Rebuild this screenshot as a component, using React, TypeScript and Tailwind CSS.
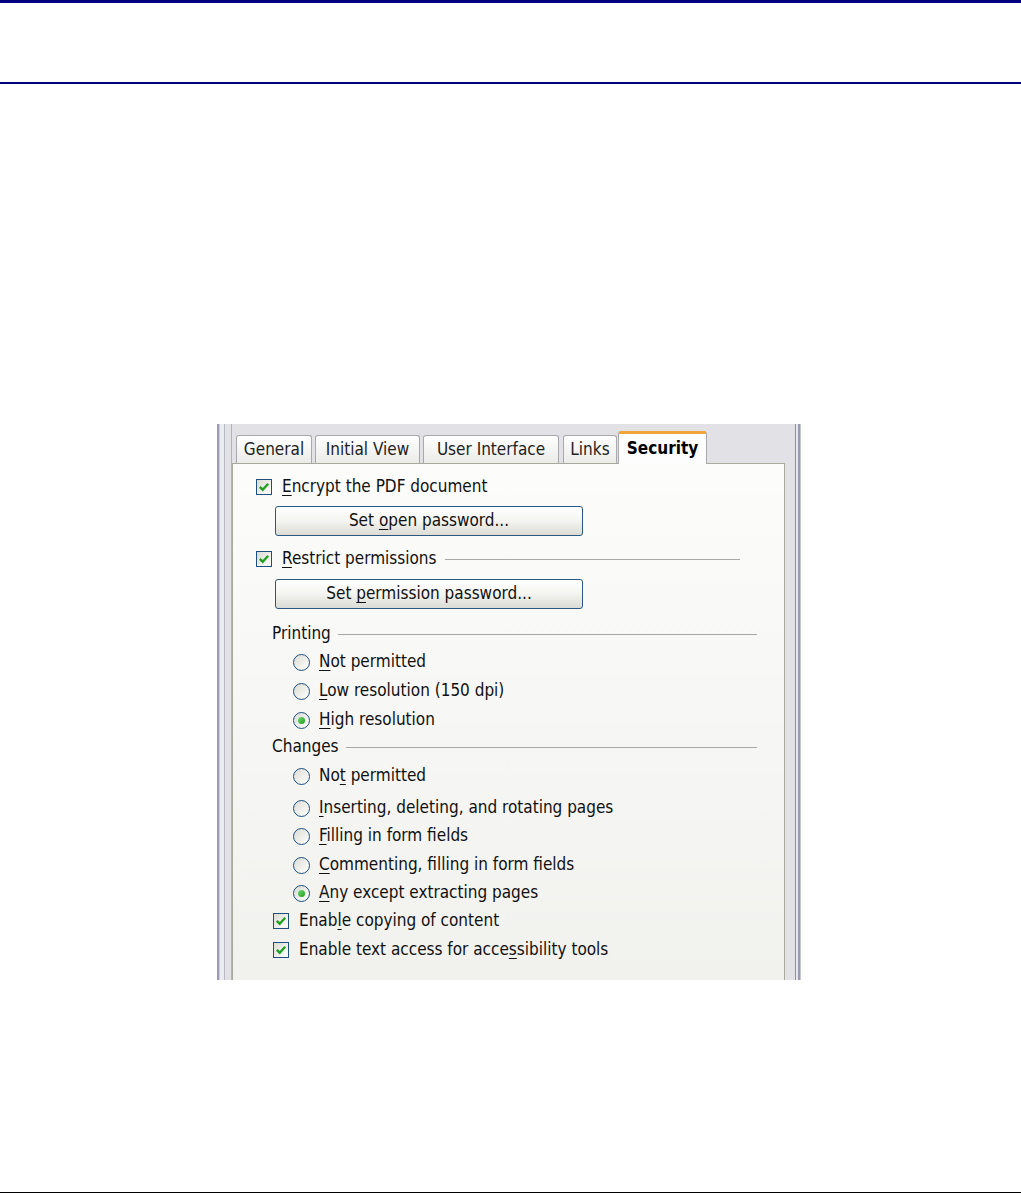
import React from "react";

const FONT = "font-['DejaVu_Sans_Condensed','DejaVu_Sans',sans-serif]";

// one label with its access-key letter underlined
const Label: React.FC<{ text: string; u?: number }> = ({ text, u }) => {
  if (u === undefined) return <span>{text}</span>;
  return (
    <span>
      {text.slice(0, u)}
      <span className="underline underline-offset-[3px] decoration-1">{text[u]}</span>
      {text.slice(u + 1)}
    </span>
  );
};

const CheckBox: React.FC = () => (
  <div className="w-[16px] h-[16px] shrink-0 border border-[#1f4f7e] bg-gradient-to-br from-[#dcdcd4] to-[#ffffff] flex items-center justify-center">
    <svg width="12" height="12" viewBox="0 0 12 12">
      <path d="M1.8 5.8 L4.7 8.7 L10.2 2.8" fill="none" stroke="#21a121" strokeWidth="2.4" />
    </svg>
  </div>
);

const Radio: React.FC<{ on?: boolean }> = ({ on }) => (
  <div className="w-[17px] h-[17px] shrink-0 rounded-full border border-[#1f4f7e] bg-gradient-to-br from-[#dcdcd4] to-[#ffffff] flex items-center justify-center">
    {on && <div className="w-[7px] h-[7px] rounded-full bg-gradient-to-br from-[#6fdc6f] to-[#1c9c1c]" />}
  </div>
);

const PushButton: React.FC<{ text: string; u: number; mt: string }> = ({ text, u, mt }) => (
  <div
    className={`${mt} ml-[42px] w-[308px] h-[30px] rounded-[3px] border border-[#2d5783] bg-gradient-to-b from-[#ffffff] via-[#f4f4f0] to-[#dcdcd6] flex items-center justify-center`}
  >
    <Label text={text} u={u} />
  </div>
);

const Tab: React.FC<{ text: string; w: string; ml: string }> = ({ text, w, ml }) => (
  <div
    className={`${w} ${ml} h-[28px] rounded-t-[3px] border border-b-0 border-[#a9a8ad] bg-gradient-to-b from-[#ffffff] to-[#ebebe8] flex items-center justify-center text-[#222]`}
  >
    {text}
  </div>
);

const radioRow = "h-[20px] ml-[60px] flex items-center gap-[9px]";

export default function App() {
  return (
    <div className={`w-[1021px] h-[1193px] bg-white flex flex-col ${FONT} text-[17px] text-[#111]`}>
      <div className="h-[3px] bg-[#000080]" />
      <div className="h-[79px]" />
      <div className="h-[2px] bg-[#000080]" />
      <div className="h-[340px]" />

      {/* dialog capture */}
      <div className="ml-[217px] w-[584px] h-[556px] flex bg-[#e1e1e6] overflow-hidden">
        <div className="w-[3px] flex">
          <div className="w-[2px] bg-[#9b9bb3]" />
          <div className="w-px bg-[#cfcfd8]" />
        </div>
        <div className="w-[12px] flex">
          <div className="w-[4px] bg-[#ececf0]" />
          <div className="w-px bg-[#b8b8c2]" />
          <div className="w-[6px]" />
          <div className="w-px bg-[#b3b3b8]" />
        </div>

        <div className="w-[553px] flex flex-col">
          {/* tab strip */}
          <div className="h-[39px] flex items-end pl-[4px]">
            <Tab text="General" w="w-[76px]" ml="ml-0" />
            <Tab text="Initial View" w="w-[105px]" ml="ml-[3px]" />
            <Tab text="User Interface" w="w-[136px]" ml="ml-[3px]" />
            <Tab text="Links" w="w-[54px]" ml="ml-[4px]" />
            <div className="relative z-10 -mb-px w-[89px] h-[33px] ml-px rounded-t-[3px] border border-b-0 border-[#a9a8ad] border-t-[3px] border-t-[#f0a53a] bg-[#fdfdfd] flex items-center justify-center font-bold text-[#000]">
              Security
            </div>
          </div>

          {/* page */}
          <div className="flex-1 border border-b-0 border-[#a9a99e] bg-gradient-to-b from-[#fcfcfb] to-[#f1f1ee] flex flex-col">
            <div className="mt-[13px] h-[20px] ml-[23px] flex items-center gap-[10px]">
              <CheckBox />
              <Label text="Encrypt the PDF document" u={0} />
            </div>
            <PushButton text="Set open password..." u={4} mt="mt-[9px]" />

            <div className="mt-[13px] h-[20px] ml-[23px] mr-[44px] flex items-center">
              <CheckBox />
              <div className="ml-[10px]">
                <Label text="Restrict permissions" u={0} />
              </div>
              <div className="flex-1 ml-[8px] border-t border-[#a8a8a8]" />
            </div>
            <PushButton text="Set permission password..." u={4} mt="mt-[10px]" />

            <div className="mt-[15px] h-[20px] ml-[39px] mr-[27px] flex items-center">
              <span>Printing</span>
              <div className="flex-1 ml-[7px] border-t border-[#a8a8a8]" />
            </div>
            <div className={`mt-[8px] ${radioRow}`}>
              <Radio />
              <Label text="Not permitted" u={0} />
            </div>
            <div className={`mt-[9px] ${radioRow}`}>
              <Radio />
              <Label text="Low resolution (150 dpi)" u={0} />
            </div>
            <div className={`mt-[9px] ${radioRow}`}>
              <Radio on />
              <Label text="High resolution" u={0} />
            </div>

            <div className="mt-[7px] h-[20px] ml-[39px] mr-[27px] flex items-center">
              <span>Changes</span>
              <div className="flex-1 ml-[7px] border-t border-[#a8a8a8]" />
            </div>
            <div className={`mt-[9px] ${radioRow}`}>
              <Radio />
              <Label text="Not permitted" u={2} />
            </div>
            <div className={`mt-[12px] ${radioRow}`}>
              <Radio />
              <Label text="Inserting, deleting, and rotating pages" u={0} />
            </div>
            <div className={`mt-[8px] ${radioRow}`}>
              <Radio />
              <Label text="Filling in form fields" u={0} />
            </div>
            <div className={`mt-[9px] ${radioRow}`}>
              <Radio />
              <Label text="Commenting, filling in form fields" u={0} />
            </div>
            <div className={`mt-[8px] ${radioRow}`}>
              <Radio on />
              <Label text="Any except extracting pages" u={0} />
            </div>

            <div className="mt-[8px] h-[20px] ml-[40px] flex items-center gap-[10px]">
              <CheckBox />
              <Label text="Enable copying of content" u={4} />
            </div>
            <div className="mt-[9px] h-[20px] ml-[40px] flex items-center gap-[10px]">
              <CheckBox />
              <Label text="Enable text access for accessibility tools" u={27} />
            </div>
          </div>
        </div>

        <div className="w-[10px]" />
        <div className="w-[6px] flex">
          <div className="w-px bg-[#8f8fa8]" />
          <div className="w-[2px] bg-[#e6e6ec]" />
          <div className="w-[2px] bg-[#9a9ab0]" />
          <div className="w-px bg-[#c8c8d0]" />
        </div>
      </div>

      <div className="flex-1" />
      <div className="h-px bg-black" />
    </div>
  );
}
